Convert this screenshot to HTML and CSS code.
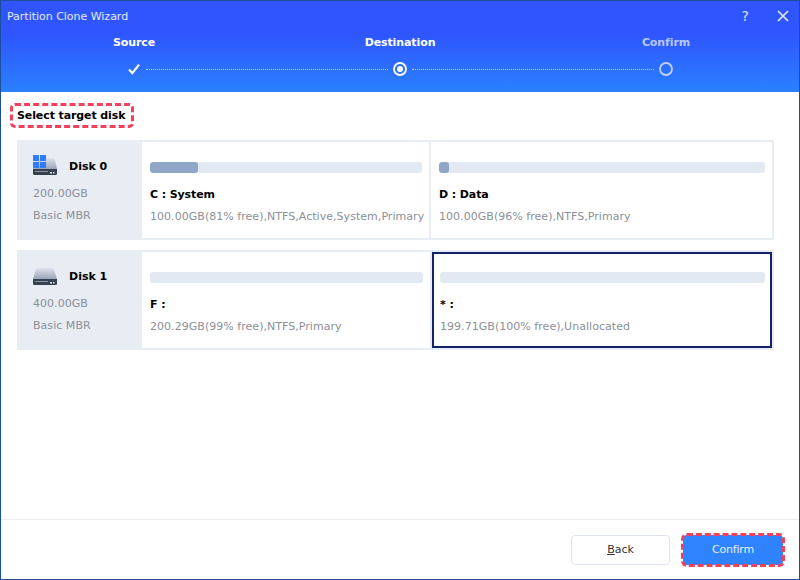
FILE: index.html
```html
<!DOCTYPE html>
<html lang="en">
<head>
<meta charset="utf-8">
<title>Partition Clone Wizard</title>
<link rel="stylesheet" href="styles.css">
</head>
<body>
<div class="window">
  <header class="header">
    <div class="titlebar">
      <span class="title">Partition Clone Wizard</span>
      <div class="win-btns">
        <span class="help">?</span>
        <svg class="close" width="14" height="14" viewBox="0 0 14 14"><path d="M2 2l10 10M12 2L2 12" stroke="#dfe6ff" stroke-width="1.7" fill="none"/></svg>
      </div>
    </div>
    <div class="steps">
      <div class="step-label">Source</div>
      <div class="step-label">Destination</div>
      <div class="step-label dim">Confirm</div>
    </div>
    <div class="track">
      <svg class="node" width="16" height="16" viewBox="0 0 16 16"><path d="M3 8.500l3.400 3.600L13 3.600" stroke="#fff" stroke-width="2.200" fill="none"/></svg>
      <div class="line"></div>
      <svg class="node" width="16" height="16" viewBox="0 0 16 16"><circle cx="8" cy="8" r="6" stroke="#fff" stroke-width="1.800" fill="none"/><circle cx="8" cy="8" r="3" fill="#fff"/></svg>
      <div class="line"></div>
      <svg class="node" width="16" height="16" viewBox="0 0 16 16"><circle cx="8" cy="8" r="6" stroke="#c3d0fb" stroke-width="1.800" fill="none"/></svg>
    </div>
  </header>

  <main class="content">
    <div class="heading"><span class="heading-text">Select target disk</span></div>

    <section class="disk">
      <div class="disk-info">
        <div class="disk-name">
          <svg class="disk-icon" width="24" height="20" viewBox="0 0 24 20">
            <defs><linearGradient id="g0" x1="0" y1="0" x2="0" y2="1"><stop offset="0" stop-color="#dfe3ec"/><stop offset="1" stop-color="#9aa3b8"/></linearGradient></defs>
            <path d="M5 3h15a2 2 0 0 1 2 1.500L24 14H0L3 4.500A2 2 0 0 1 5 3z" fill="url(#g0)"/>
            <path d="M0 14h24v4.500a1.500 1.500 0 0 1-1.500 1.500h-21A1.500 1.500 0 0 1 0 18.500z" fill="#36404f"/>
            <rect x="2" y="16" width="13" height="1" fill="#8a93a5"/><rect x="17" y="17" width="2" height="1.500" fill="#dfe6f2"/><rect x="20" y="17" width="1.500" height="1.500" fill="#dfe6f2"/>
            <rect x="0" y="0" width="6" height="6" fill="#2f7dfb"/><rect x="7" y="0" width="6" height="6" fill="#2f7dfb"/><rect x="0" y="7" width="6" height="6" fill="#2f7dfb"/><rect x="7" y="7" width="6" height="6" fill="#2f7dfb"/>
          </svg>
          <b>Disk 0</b>
        </div>
        <div class="muted size">200.00GB</div>
        <div class="muted type">Basic MBR</div>
      </div>
      <div class="part part-first">
        <div class="bar"><div class="fill fill-c"></div></div>
        <div class="part-name">C : System</div>
        <div class="muted">100.00GB(81% free),NTFS,Active,System,Primary</div>
      </div>
      <div class="part">
        <div class="bar"><div class="fill fill-d"></div></div>
        <div class="part-name">D : Data</div>
        <div class="muted">100.00GB(96% free),NTFS,Primary</div>
      </div>
    </section>

    <section class="disk">
      <div class="disk-info">
        <div class="disk-name">
          <svg class="disk-icon" width="24" height="20" viewBox="0 0 24 20">
            <defs><linearGradient id="g1" x1="0" y1="0" x2="0" y2="1"><stop offset="0" stop-color="#dfe3ec"/><stop offset="1" stop-color="#9aa3b8"/></linearGradient></defs>
            <path d="M5 3h14a2 2 0 0 1 2 1.500L24 14H0L3 4.500A2 2 0 0 1 5 3z" fill="url(#g1)"/>
            <path d="M0 14h24v4.500a1.500 1.500 0 0 1-1.500 1.500h-21A1.500 1.500 0 0 1 0 18.500z" fill="#36404f"/>
            <rect x="2" y="16" width="13" height="1" fill="#8a93a5"/><rect x="17" y="17" width="2" height="1.500" fill="#dfe6f2"/><rect x="20" y="17" width="1.500" height="1.500" fill="#dfe6f2"/>
          </svg>
          <b>Disk 1</b>
        </div>
        <div class="muted size">400.00GB</div>
        <div class="muted type">Basic MBR</div>
      </div>
      <div class="part part-first part-wide">
        <div class="bar"></div>
        <div class="part-name">F :</div>
        <div class="muted">200.29GB(99% free),NTFS,Primary</div>
      </div>
      <div class="part selected">
        <div class="bar"></div>
        <div class="part-name">* :</div>
        <div class="muted">199.71GB(100% free),Unallocated</div>
      </div>
    </section>
  </main>

  <footer class="footer">
    <button class="btn btn-back"><u>B</u>ack</button>
    <button class="btn btn-confirm">Confirm</button>
  </footer>
</div>
</body>
</html>
```
FILE: styles.css
```css
* { box-sizing: border-box; }
html, body { margin: 0; padding: 0; }
body { width: 800px; height: 580px; overflow: hidden; background: #fff; font-family: "DejaVu Sans", sans-serif; font-size: 11px; color: #000; }
.window { width: 800px; height: 580px; display: flex; flex-direction: column; border: 1px solid #1b4f9e; border-top: 0; }
.header { height: 92px; flex: none; color: #fff; background: linear-gradient(180deg, #2f55ff 0%, #2f55ff 35%, #2a80ff 100%); border-top: 1px solid #1b4f9e; }
.titlebar { height: 29px; display: flex; align-items: center; justify-content: space-between; padding: 1px 9px 0 6px; }
.title { font-size: 11px; color: #e6ebff; letter-spacing: -0.02px; }
.win-btns { display: flex; align-items: center; gap: 27px; }
.help { font-size: 14px; color: #dfe6ff; }
.close { display: block; }
.steps { display: grid; grid-template-columns: repeat(3, 266px); margin-top: 3px; height: 18px; align-items: center; }
.step-label { text-align: center; font-weight: 700; font-size: 11px; letter-spacing: -0.1px; }
.step-label.dim { color: #b9c8fb; }
.track { display: flex; align-items: center; gap: 4px; padding: 0 125px; margin-top: 10px; height: 16px; }
.node { display: block; flex: none; }
.line { flex: 1; border-top: 1px dotted #c3d4ff; }
.content { flex: 1; padding: 11px 16px 0 9px; }
.heading { margin-bottom: 12px; height: 25px; }
.heading-text { display: inline-flex; align-items: center; height: 25px; padding: 0 4px; border: 3px dashed #f0405a; border-radius: 5px; font-weight: 700; font-size: 11px; width: 124px; letter-spacing: -0.1px; white-space: nowrap; }
.disk { display: flex; width: 757px; height: 100px; margin-left: 7px; margin-bottom: 10px; border: 2px solid #e8ecf3; background: #e8ecf3; }
.disk-info { width: 123px; flex: none; padding: 10px 0 0 14px; background: #e8ecf3; }
.disk-name { display: flex; align-items: center; gap: 12px; height: 26px; font-size: 11px; }
.disk-name b { margin-top: 2px; }
.disk-icon { display: block; }
.size { margin-top: 9px; }
.type { margin-top: 8px; }
.muted { color: #8b8f98; line-height: 14px; white-space: nowrap; letter-spacing: 0.04px; }
.part { flex: 1; background: #fff; padding: 20px 7px 0 8px; min-width: 0; }
.part-first { flex: none; width: 287px; margin-right: 2px; }
.part-wide { width: 288px; }
.bar { height: 11px; border-radius: 3px; background: #e3e9f3; overflow: hidden; }
.fill { height: 100%; border-radius: 3px; background: #90a6c6; }
.fill-c { width: 48px; }
.fill-d { width: 10px; }
.part-name { font-weight: 700; margin-top: 15px; line-height: 14px; letter-spacing: -0.1px; }
.part-name + .muted { margin-top: 8px; }
.selected { border: 2px solid #12236b; padding: 18px 5px 0 6px; }
.footer { height: 60px; flex: none; display: flex; justify-content: flex-end; align-items: center; gap: 13px; padding: 0 16px 0 0; border-top: 1px solid #e8ecf3; }
.btn { font-family: inherit; font-size: 11px; height: 30px; border-radius: 4px; padding: 0; }
.btn-back { width: 99px; background: #fff; border: 1px solid #dde3ef; color: #333; }
.btn-confirm { width: 100px; background: #2f83ff; color: #e8f0ff; border: 0; outline: 3px dashed #f0405a; outline-offset: -1px; letter-spacing: -0.2px; }
```
